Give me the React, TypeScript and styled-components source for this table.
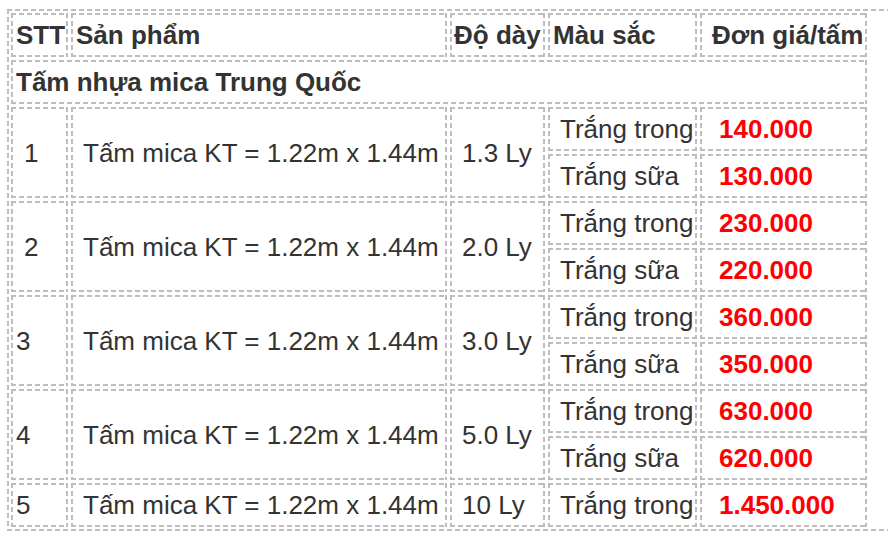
import React from "react";
import styled, { createGlobalStyle, css } from "styled-components";

const GlobalStyle = createGlobalStyle`
  html, body {
    margin: 0;
    padding: 0;
    background: #fff;
    overflow: hidden;
  }
  body {
    font-family: "Liberation Sans", Arial, sans-serif;
    color: #333;
  }
`;

// dashed outline: 5px dash, 3px gap, like the reference
const dashLine = "#bdbdbd";
const dashed = css`
  border: 1px solid transparent;
  background-origin: border-box;
  background-clip: border-box;
  background-image: repeating-linear-gradient(90deg, ${dashLine} 0 5px, transparent 5px 8px),
    repeating-linear-gradient(90deg, ${dashLine} 0 5px, transparent 5px 8px),
    repeating-linear-gradient(180deg, ${dashLine} 0 5px, transparent 5px 8px),
    repeating-linear-gradient(180deg, ${dashLine} 0 5px, transparent 5px 8px);
  background-size: 100% 2px, 100% 2px, 2px 100%, 2px 100%;
  background-position: left top, left bottom, left top, right top;
  background-repeat: no-repeat;
`;

const Frame = styled.div`
  ${dashed};
  margin: 9px 0 0 7px;
  width: 900px;
`;

const PriceTable = styled.table`
  table-layout: fixed;
  width: 862px;
  border-collapse: separate;
  border-spacing: 3px;
  font-size: 26px;
  line-height: 30px;
`;

const HeadCell = styled.th<{ $width: number; $indent?: number }>`
  ${dashed};
  box-sizing: border-box;
  width: ${(p) => p.$width}px;
  height: 44px;
  padding: 6px 0 6px ${(p) => 4 + (p.$indent ?? 0)}px;
  text-align: left;
  font-weight: 700;
  white-space: nowrap;
  overflow: hidden;
`;

const GroupCell = styled.td`
  ${dashed};
  box-sizing: border-box;
  height: 44px;
  padding: 6px 4px;
  font-weight: 700;
  text-align: left;
`;

const Cell = styled.td<{ $indent?: number }>`
  ${dashed};
  box-sizing: border-box;
  height: 44px;
  padding: 6px 0 6px ${(p) => 4 + (p.$indent ?? 0)}px;
  text-align: left;
  vertical-align: middle;
  white-space: nowrap;
`;

const PriceCell = styled(Cell)`
  color: #ff0000;
  font-weight: 700;
`;

interface Variant {
  color: string;
  price: string;
}

interface Item {
  stt: string;
  sttIndent: number;
  thickness: string;
  variants: Variant[];
}

const items: Item[] = [
  {
    stt: "1",
    sttIndent: 8,
    thickness: "1.3 Ly",
    variants: [
      { color: "Trắng trong", price: "140.000" },
      { color: "Trắng sữa", price: "130.000" },
    ],
  },
  {
    stt: "2",
    sttIndent: 8,
    thickness: "2.0 Ly",
    variants: [
      { color: "Trắng trong", price: "230.000" },
      { color: "Trắng sữa", price: "220.000" },
    ],
  },
  {
    stt: "3",
    sttIndent: 0,
    thickness: "3.0 Ly",
    variants: [
      { color: "Trắng trong", price: "360.000" },
      { color: "Trắng sữa", price: "350.000" },
    ],
  },
  {
    stt: "4",
    sttIndent: 0,
    thickness: "5.0 Ly",
    variants: [
      { color: "Trắng trong", price: "630.000" },
      { color: "Trắng sữa", price: "620.000" },
    ],
  },
  {
    stt: "5",
    sttIndent: 0,
    thickness: "10 Ly",
    variants: [{ color: "Trắng trong", price: "1.450.000" }],
  },
];

const product = "Tấm mica KT = 1.22m x 1.44m";

export default function App() {
  return (
    <>
      <GlobalStyle />
      <Frame>
        <PriceTable>
          <tbody>
            <tr>
              <HeadCell $width={57}>STT</HeadCell>
              <HeadCell $width={376}>Sản phẩm</HeadCell>
              <HeadCell $width={95} $indent={-1}>
                Độ dày
              </HeadCell>
              <HeadCell $width={149}>Màu sắc</HeadCell>
              <HeadCell $width={167} $indent={7}>
                Đơn giá/tấm
              </HeadCell>
            </tr>
            <tr>
              <GroupCell colSpan={5}>Tấm nhựa mica Trung Quốc</GroupCell>
            </tr>
            {items.map((item) =>
              item.variants.map((v, i) => (
                <tr key={item.stt + "-" + i}>
                  {i === 0 && (
                    <>
                      <Cell rowSpan={item.variants.length} $indent={item.sttIndent}>
                        {item.stt}
                      </Cell>
                      <Cell rowSpan={item.variants.length} $indent={7}>
                        {product}
                      </Cell>
                      <Cell rowSpan={item.variants.length} $indent={7}>
                        {item.thickness}
                      </Cell>
                    </>
                  )}
                  <Cell $indent={7}>{v.color}</Cell>
                  <PriceCell $indent={14}>{v.price}</PriceCell>
                </tr>
              ))
            )}
          </tbody>
        </PriceTable>
      </Frame>
    </>
  );
}
